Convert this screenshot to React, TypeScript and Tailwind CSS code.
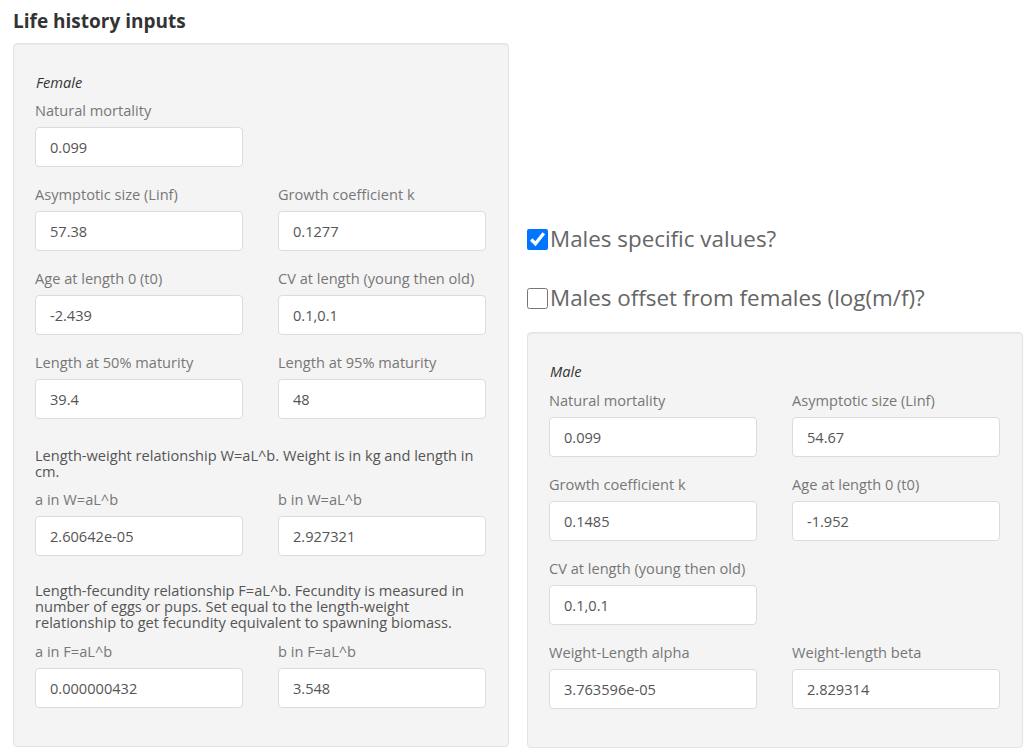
import React from 'react';

const font = { fontFamily: '"Open Sans", "Noto Sans", sans-serif' };

function Field({ label, value }: { label: string; value: string }) {
  return (
    <div className="flex flex-col w-[208px]">
      <label className="text-[14.6px] leading-[20px] text-[#777]">{label}</label>
      <input
        readOnly
        value={value}
        className="mt-[7px] h-[40px] w-[208px] rounded-[4px] border border-[#dcdcdc] bg-white pl-[14px] text-[14.6px] text-[#555] outline-none"
      />
    </div>
  );
}

function Row({ children }: { children: React.ReactNode }) {
  return <div className="flex gap-[35px] mt-[17px]">{children}</div>;
}

function Note({ children }: { children: React.ReactNode }) {
  return (
    <p className="text-[14.6px] leading-[16px] text-[#555] w-[451px]">{children}</p>
  );
}

export default function App() {
  return (
    <div style={font} className="w-[1024px] h-[748px] overflow-hidden bg-white">
      <h3 className="pl-[13px] pt-[9px] text-[19px] leading-[24px] font-bold text-[#333]">
        Life history inputs
      </h3>
      <div className="flex pl-[13px] mt-[10px] gap-[18px]">
        {/* Female panel */}
        <div className="w-[496px] h-[704px] rounded-[4px] border border-[#e3e3e3] bg-[#f4f4f4] px-[21px] pt-[28px] shadow-[inset_0_1px_1px_rgba(0,0,0,0.05)]">
          <div className="italic text-[14.6px] leading-[20px] text-[#333] pl-px">Female</div>
          <div className="mt-[8px]">
            <Field label="Natural mortality" value="0.099" />
          </div>
          <Row>
            <Field label="Asymptotic size (Linf)" value="57.38" />
            <Field label="Growth coefficient k" value="0.1277" />
          </Row>
          <Row>
            <Field label="Age at length 0 (t0)" value="-2.439" />
            <Field label="CV at length (young then old)" value="0.1,0.1" />
          </Row>
          <Row>
            <Field label="Length at 50% maturity" value="39.4" />
            <Field label="Length at 95% maturity" value="48" />
          </Row>
          <div className="mt-[28px]">
            <Note>Length-weight relationship W=aL^b. Weight is in kg and length in cm.</Note>
          </div>
          <div className="flex gap-[35px] mt-[10px]">
            <Field label="a in W=aL^b" value="2.60642e-05" />
            <Field label="b in W=aL^b" value="2.927321" />
          </div>
          <div className="mt-[26px]">
            <Note>
              Length-fecundity relationship F=aL^b. Fecundity is measured in number of eggs or pups. Set equal to the length-weight relationship to get fecundity equivalent to spawning biomass.
            </Note>
          </div>
          <div className="flex gap-[35px] mt-[11px]">
            <Field label="a in F=aL^b" value="0.000000432" />
            <Field label="b in F=aL^b" value="3.548" />
          </div>
        </div>

        {/* Male column */}
        <div className="w-[496px] flex flex-col">
          <label className="flex items-center mt-[182px] h-[28px] text-[22.4px] text-[#666]">
            <input type="checkbox" defaultChecked className="m-0 w-[21px] h-[21px]" />
            <span className="ml-[2px]">Males specific values?</span>
          </label>
          <label className="flex items-center mt-[31px] h-[28px] text-[22.4px] text-[#666]">
            <input type="checkbox" className="m-0 w-[21px] h-[21px]" />
            <span className="ml-[2px]">Males offset from females (log(m/f)?</span>
          </label>
          <div className="mt-[20px] h-[416px] rounded-[4px] border border-[#e3e3e3] bg-[#f4f4f4] px-[21px] pt-[28px] shadow-[inset_0_1px_1px_rgba(0,0,0,0.05)]">
            <div className="italic text-[14.6px] leading-[20px] text-[#333] pl-px">Male</div>
            <div className="flex gap-[35px] mt-[9px]">
              <Field label="Natural mortality" value="0.099" />
              <Field label="Asymptotic size (Linf)" value="54.67" />
            </div>
            <Row>
              <Field label="Growth coefficient k" value="0.1485" />
              <Field label="Age at length 0 (t0)" value="-1.952" />
            </Row>
            <Row>
              <Field label="CV at length (young then old)" value="0.1,0.1" />
            </Row>
            <Row>
              <Field label="Weight-Length alpha" value="3.763596e-05" />
              <Field label="Weight-length beta" value="2.829314" />
            </Row>
          </div>
        </div>
      </div>
    </div>
  );
}
